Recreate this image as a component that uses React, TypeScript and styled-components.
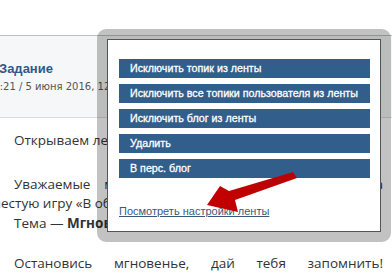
import React from "react";
import styled, { createGlobalStyle } from "styled-components";

const Global = createGlobalStyle`
  html, body { margin: 0; padding: 0; background: #ffffff; }
  body { width: 392px; height: 276px; overflow: hidden; }
`;

const Page = styled.div`
  position: relative;
  width: 392px;
  height: 276px;
  overflow: hidden;
  padding-top: 35px;
  box-sizing: border-box;
  font-family: "Open Sans", "Liberation Sans", sans-serif;
`;

const PostHeader = styled.div`
  height: 83px;
  border-top: 1px solid #b9c2cc;
  border-bottom: 1px solid #dcdcdc;
  background: #f6f7f8;
  padding-top: 25px;
  box-sizing: border-box;
  display: flex;
  flex-direction: column;
  gap: 2px;
`;

const Title = styled.div`
  font-family: "Liberation Sans", sans-serif;
  font-weight: bold;
  font-size: 13px;
  line-height: 16px;
  color: #2d5b88;
  margin-left: -1px;
`;

const DateLine = styled.div`
  font-family: "DejaVu Sans", sans-serif;
  font-size: 10px;
  line-height: 15px;
  color: #555555;
  margin-left: -13px;
  white-space: nowrap;
`;

const Content = styled.div`
  margin-left: -11px;
  width: 394px;
  padding-top: 13px;
  color: #333333;
  font-size: 13.5px;
  line-height: 19.5px;
`;

const Line = styled.div<{ $indent?: boolean; $justify?: boolean; $gap?: number }>`
  text-indent: ${(p) => (p.$indent ? "25px" : "0")};
  text-align: ${(p) => (p.$justify ? "justify" : "left")};
  text-align-last: ${(p) => (p.$justify ? "justify" : "left")};
  margin-bottom: ${(p) => p.$gap ?? 0}px;
  white-space: nowrap;
  overflow: hidden;
`;

const Bold = styled.b`
  font-weight: bold;
`;

const Frame = styled.div`
  position: absolute;
  left: 97px;
  top: 29px;
  width: 294px;
  height: 213px;
  box-sizing: border-box;
  border: 10px solid rgba(0, 0, 0, 0.24);
  border-radius: 9px;
  background-clip: padding-box;
`;

const Box = styled.div`
  height: 100%;
  box-sizing: border-box;
  background: #ffffff;
  border: 1px solid #555555;
  padding: 19px 10px 0 11px;
  display: flex;
  flex-direction: column;
`;

const Menu = styled.div`
  display: flex;
  flex-direction: column;
  gap: 6px;
`;

const MenuButton = styled.div`
  height: 19px;
  background: #325e8c;
  color: #ffffff;
  font-family: "Liberation Sans", sans-serif;
  font-size: 10.7px;
  line-height: 19px;
  padding-left: 11px;
  white-space: nowrap;
  -webkit-text-stroke: 0.3px #ffffff;
`;

const SettingsLink = styled.a`
  margin-top: 27px;
  font-family: "Liberation Sans", sans-serif;
  font-size: 11px;
  line-height: 13px;
  color: #3a5878;
  text-decoration: underline;
  align-self: flex-start;
`;

const Arrow = styled.svg`
  position: absolute;
  left: 0;
  top: 0;
  pointer-events: none;
`;

const items = [
  "Исключить топик из ленты",
  "Исключить все топики пользователя из ленты",
  "Исключить блог из ленты",
  "Удалить",
  "В перс. блог",
];

export default function App() {
  return (
    <>
      <Global />
      <Page>
        <PostHeader>
          <Title>Задание</Title>
          <DateLine>05:21 / 5 июня 2016, 12:40</DateLine>
        </PostHeader>
        <Content>
          <Line $indent $gap={24}>Открываем ленту фотографий участников.</Line>
          <Line $indent $justify>Уважаемые мастера фотографии, приглашаем на</Line>
          <Line>шестую игру «В объективе». Правила прежние.</Line>
          <Line $indent $gap={21}>
            Тема — <Bold>Мгновение</Bold>
          </Line>
          <Line $indent $justify>Остановись мгновенье, дай тебя запомнить!</Line>
        </Content>
        <Frame>
          <Box>
            <Menu>
              {items.map((t) => (
                <MenuButton key={t}>{t}</MenuButton>
              ))}
            </Menu>
            <SettingsLink href="#">Посмотреть настройки ленты</SettingsLink>
          </Box>
        </Frame>
        <Arrow width="392" height="276" viewBox="0 0 392 276">
          <defs>
            <linearGradient id="ar" x1="0" y1="0" x2="1" y2="0">
              <stop offset="0" stopColor="#c40000" />
              <stop offset="1" stopColor="#b80404" />
            </linearGradient>
          </defs>
          <polygon
            points="207,205 220,186 229,191 293,172 297,178 235,200 238,212"
            fill="url(#ar)"
          />
        </Arrow>
      </Page>
    </>
  );
}
